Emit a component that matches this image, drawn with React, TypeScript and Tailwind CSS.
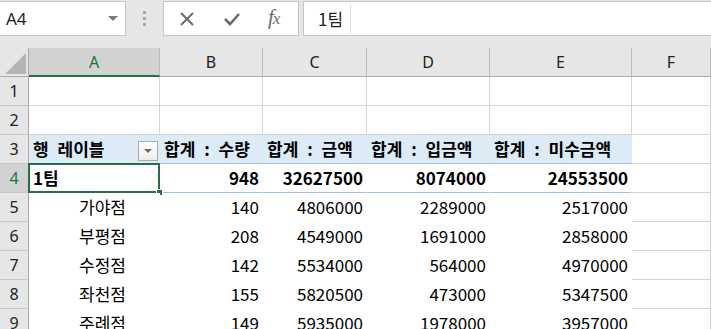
const KR = "font-['Noto_Sans_CJK_KR',sans-serif]";

type Row = { label: string; vals: string[]; kind: 'empty' | 'head' | 'total' | 'item' };

const rows: Row[] = [
  { label: '', vals: [], kind: 'empty' },
  { label: '', vals: [], kind: 'empty' },
  { label: '행 레이블', vals: ['합계 : 수량', '합계 : 금액', '합계 : 입금액', '합계 : 미수금액'], kind: 'head' },
  { label: '1팀', vals: ['948', '32627500', '8074000', '24553500'], kind: 'total' },
  { label: '가야점', vals: ['140', '4806000', '2289000', '2517000'], kind: 'item' },
  { label: '부평점', vals: ['208', '4549000', '1691000', '2858000'], kind: 'item' },
  { label: '수정점', vals: ['142', '5534000', '564000', '4970000'], kind: 'item' },
  { label: '좌천점', vals: ['155', '5820500', '473000', '5347500'], kind: 'item' },
  { label: '주례점', vals: ['149', '5935000', '1978000', '3957000'], kind: 'item' },
];

const cols = ['A', 'B', 'C', 'D', 'E', 'F'];
const grid = 'grid grid-cols-[29px_131px_103px_104px_123px_142px_1fr]';

function FormulaBar() {
  return (
    <div className="flex items-start h-[48px] pt-[1px]">
      {/* name box */}
      <div className="relative w-[126px] h-[35px] bg-white border border-l-0 border-[#c6c6c6] flex items-center">
        <span className="pl-[6px] text-[17px] text-[#222] font-['Noto_Sans',sans-serif]">A4</span>
        <div className="absolute right-[7px] top-[14px] w-0 h-0 border-l-[5px] border-r-[5px] border-t-[5px] border-l-transparent border-r-transparent border-t-[#7a7a7a]" />
      </div>
      {/* grip */}
      <div className="w-[37px] h-[35px] flex flex-col items-center justify-center gap-[3px]">
        <div className="w-[3px] h-[3px] bg-[#a8a8a8]" />
        <div className="w-[3px] h-[3px] bg-[#a8a8a8]" />
        <div className="w-[3px] h-[3px] bg-[#a8a8a8]" />
      </div>
      {/* buttons */}
      <div className="w-[136px] h-[35px] bg-white border border-[#c6c6c6] flex items-center">
        <svg width="18" height="18" viewBox="0 0 18 18" className="ml-[14px]">
          <path d="M3 3 L15 15 M15 3 L3 15" stroke="#6b6b6b" strokeWidth="2" />
        </svg>
        <svg width="20" height="18" viewBox="0 0 20 18" className="ml-[26px]">
          <path d="M3 9 L8 14 L17 4" stroke="#6b6b6b" strokeWidth="2.6" fill="none" />
        </svg>
        <span className="ml-[26px] mb-[2px] text-[21px] italic text-[#6b6b6b] font-['Liberation_Serif',serif] tracking-[-1px] leading-none">
          f<span className="text-[17px]">x</span>
        </span>
      </div>
      {/* formula input */}
      <div className="flex-1 ml-[4px] h-[35px] bg-white border border-r-0 border-[#c6c6c6] flex items-center">
        <span className={`pl-[14px] text-[17px] text-[#222] ${KR}`}>1팀</span>
        <div className="ml-[7px] w-px h-[30px] bg-[#e2e2e2]" />
      </div>
    </div>
  );
}

function ColumnHeader() {
  return (
    <div className={`${grid} h-[29px]`}>
      <div className="relative bg-[#e6e6e6] border-r border-b border-[#ababab]">
        <svg width="22" height="21" viewBox="0 0 22 21" className="absolute left-[5px] top-[5px]">
          <path d="M21 0 L21 21 L0 21 Z" fill="#b4b4b4" />
        </svg>
      </div>
      {cols.map((c) => (
        <div
          key={c}
          className={`flex items-center justify-center text-[16px] font-['Noto_Sans',sans-serif] border-r border-[#bcbcbc] ${
            c === 'A'
              ? 'bg-[#d2d2d2] text-[#217346] border-b-2 border-b-[#217346]'
              : 'bg-[#e6e6e6] text-[#222] border-b border-b-[#ababab]'
          }`}
        >
          {c}
        </div>
      ))}
    </div>
  );
}

function DataRow({ row, idx }: { row: Row; idx: number }) {
  const n = idx + 1;
  const pivot = row.kind !== 'empty';
  const bold = row.kind === 'head' || row.kind === 'total';
  const bg = row.kind === 'head' ? 'bg-[#ddebf7]' : 'bg-white';
  const bottom =
    row.kind === 'head' || row.kind === 'total'
      ? 'border-b-[#9bc2e6]'
      : pivot
      ? 'border-b-white'
      : 'border-b-[#d4d4d4]';
  const right = pivot ? (row.kind === 'head' ? 'border-r-[#ddebf7]' : 'border-r-white') : 'border-r-[#d4d4d4]';
  const cell = `h-[29px] border-r border-b ${bg} ${bottom} ${right} ${KR} text-[17px] text-black flex items-center whitespace-nowrap [word-spacing:5px] ${
    bold ? 'font-bold' : ''
  }`;

  return (
    <div className={grid}>
      <div
        className={`h-[29px] flex items-center justify-center text-[16px] font-['Noto_Sans',sans-serif] border-b border-[#c8c8c8] border-r ${
          n === 4 ? 'bg-[#d2d2d2] text-[#217346] border-r-[#217346]' : 'bg-[#e6e6e6] text-[#222] border-r-[#ababab]'
        }`}
      >
        {n}
      </div>
      {/* A */}
      <div className={`${cell} relative ${row.kind === 'item' ? 'pl-[50px]' : 'pl-[4px]'}`}>
        {row.label}
        {row.kind === 'head' && (
          <div className="absolute right-[1px] top-[6px] w-[20px] h-[20px] border border-[#ababab] bg-gradient-to-b from-white to-[#ececec] flex items-center justify-center">
            <div className="w-0 h-0 border-l-[4px] border-r-[4px] border-t-[4px] border-l-transparent border-r-transparent border-t-[#6a6a6a]" />
          </div>
        )}
        {n === 4 && (
          <>
            <div className="absolute -left-px -top-px -right-px -bottom-px border-2 border-[#217346] pointer-events-none" />
            <div className="absolute -right-[4px] -bottom-[4px] w-[7px] h-[7px] bg-[#217346] border border-white" />
          </>
        )}
      </div>
      {/* B..E */}
      {[0, 1, 2, 3].map((i) => (
        <div
          key={i}
          className={`${cell} ${row.kind === 'head' ? 'pl-[4px]' : 'justify-end pr-[3px]'} ${
            i === 3 ? 'border-r-[#d4d4d4]' : ''
          }`}
        >
          {row.vals[i] ?? ''}
        </div>
      ))}
      {/* F */}
      <div className="h-[29px] bg-white border-r border-b border-[#d4d4d4]" />
    </div>
  );
}

export default function App() {
  return (
    <div className="w-[711px] h-[329px] overflow-hidden bg-[#e6e6e6]">
      <FormulaBar />
      <ColumnHeader />
      {rows.map((r, i) => (
        <DataRow key={i} row={r} idx={i} />
      ))}
    </div>
  );
}
